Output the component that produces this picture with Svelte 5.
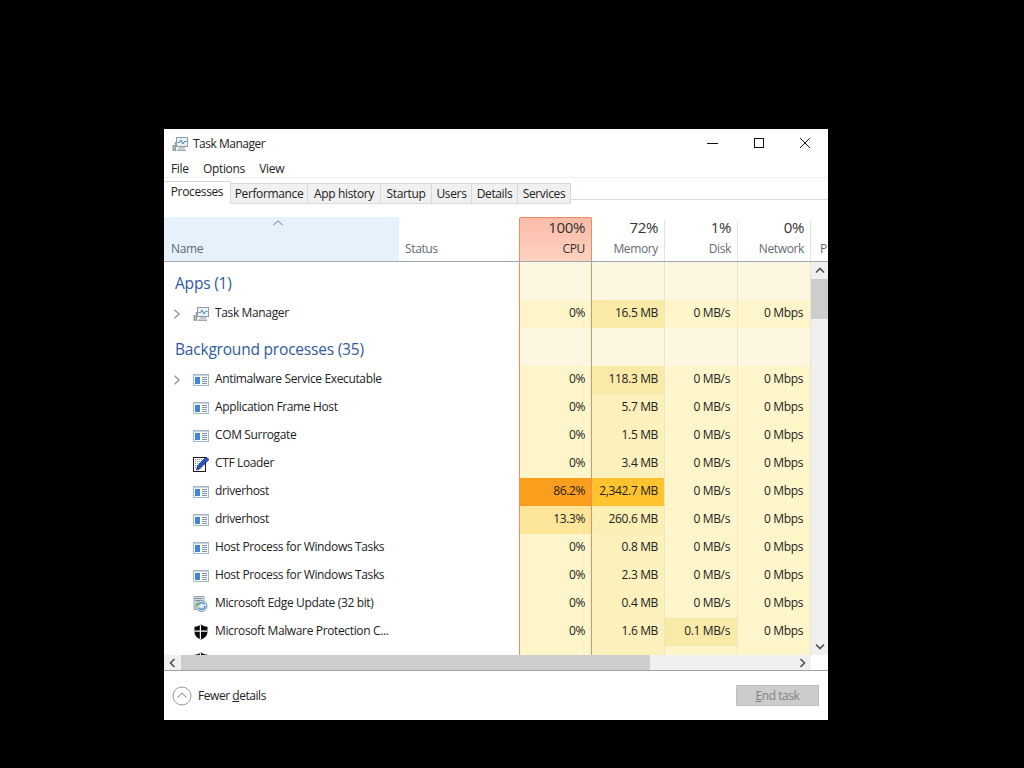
<script>
  const tabs = ['Performance', 'App history', 'Startup', 'Users', 'Details', 'Services'];

  const apps = [{ name: 'Task Manager', icon: 'tm', expand: true, cpu: '0%', mem: '16.5 MB', disk: '0 MB/s', net: '0 Mbps', memHeat: 'h2' }];

  const background = [
    { name: 'Antimalware Service Executable', icon: 'win', expand: true, cpu: '0%', mem: '118.3 MB', disk: '0 MB/s', net: '0 Mbps', memHeat: 'h2' },
    { name: 'Application Frame Host', icon: 'win', cpu: '0%', mem: '5.7 MB', disk: '0 MB/s', net: '0 Mbps' },
    { name: 'COM Surrogate', icon: 'win', cpu: '0%', mem: '1.5 MB', disk: '0 MB/s', net: '0 Mbps' },
    { name: 'CTF Loader', icon: 'pen', cpu: '0%', mem: '3.4 MB', disk: '0 MB/s', net: '0 Mbps' },
    { name: 'driverhost', icon: 'win', cpu: '86.2%', mem: '2,342.7 MB', disk: '0 MB/s', net: '0 Mbps', cpuHeat: 'h5', memHeat: 'h4' },
    { name: 'driverhost', icon: 'win', cpu: '13.3%', mem: '260.6 MB', disk: '0 MB/s', net: '0 Mbps', cpuHeat: 'h3', memHeat: 'm2' },
    { name: 'Host Process for Windows Tasks', icon: 'win', cpu: '0%', mem: '0.8 MB', disk: '0 MB/s', net: '0 Mbps' },
    { name: 'Host Process for Windows Tasks', icon: 'win', cpu: '0%', mem: '2.3 MB', disk: '0 MB/s', net: '0 Mbps' },
    { name: 'Microsoft Edge Update (32 bit)', icon: 'edge', cpu: '0%', mem: '0.4 MB', disk: '0 MB/s', net: '0 Mbps' },
    { name: 'Microsoft Malware Protection C...', icon: 'shield', cpu: '0%', mem: '1.6 MB', disk: '0.1 MB/s', net: '0 Mbps', diskHeat: 'h2' },
    { name: '', icon: 'shield', cpu: '', mem: '', disk: '', net: '' }
  ];
</script>

{#snippet icon(kind)}
  {#if kind === 'tm'}
    <svg class="ico" viewBox="0 0 16 16">
      <rect x="4.500" y="1.500" width="11" height="9" fill="#e6f0f6" stroke="#8f9ca5" />
      <path d="M5.500 6.500h2l1.500-2.500 2 4 1.500-2.500h2" fill="none" stroke="#4b8a9c" />
      <path d="M7 11h6v2H6z" fill="#c2ccd2" />
      <path d="M5 13.500h9v1.500H5z" fill="#9aa6ae" />
      <path d="M0.500 9h2v6h-2zM2.800 6h1.400v9H2.800z" fill="#8f9f98" />
    </svg>
  {:else if kind === 'win'}
    <svg class="ico" viewBox="0 0 16 16">
      <rect x="0.500" y="2.500" width="15" height="11" fill="#f8fafc" stroke="#a5b6c6" />
      <rect x="1" y="3" width="14" height="1" fill="#c3d6ea" />
      <rect x="2" y="5" width="5" height="7" fill="#3f86d2" />
      <path d="M9 5.500h5M9 7.500h5M9 9.500h5M9 11.500h5" stroke="#8294a5" />
    </svg>
  {:else if kind === 'pen'}
    <svg class="ico" viewBox="0 0 16 16">
      <rect x="0.500" y="1.500" width="12" height="14" fill="#fff" stroke="#1a1a1a" />
      <path d="M2 3.500h9M2 5.500h7M2 7.500h6M2 9.500h4M2 11.500h3" stroke="#8795a5" stroke-dasharray="1 1" />
      <path d="M3.500 14l1-4L13 1l3 2.500L6.500 13z" fill="#2c55c4" stroke="#0d1f5c" stroke-width=".7" />
    </svg>
  {:else if kind === 'edge'}
    <svg class="ico" viewBox="0 0 16 16">
      <rect x="1" y="0.500" width="10" height="13" fill="#cfdde8" stroke="#98a8b4" />
      <path d="M2 2.500h7M2 4.500h5" stroke="#7f93a4" />
      <circle cx="8.500" cy="10" r="5.500" fill="#d9e8ee" stroke="#7f8f9b" />
      <path d="M5 10a3.500 3.500 0 0 1 6.500-1.600M12 10a3.500 3.500 0 0 1-6.500 1.600" fill="none" stroke="#3a8cc7" stroke-width="1.300" />
      <path d="M2.800 7h3v3.500h-3z" fill="#7fb574" />
    </svg>
  {:else}
    <svg class="ico" viewBox="0 0 16 16">
      <path d="M8 0.500c1.800 1.300 3.800 2 6.500 2.200v5c0 3.700-2.500 6.300-6.500 7.800-4-1.500-6.500-4.100-6.500-7.800v-5C4.200 2.500 6.200 1.800 8 0.500z" fill="#0b0b0b" />
      <path d="M7.400 1v14M1.500 7.200h13" stroke="#fff" stroke-width="1.200" />
    </svg>
  {/if}
{/snippet}

{#snippet row(r)}
  <div class="row">
    <div class="name">
      <span class="expander">
        {#if r.expand}
          <svg width="8" height="10" viewBox="0 0 8 10"><path d="M1.500 0.800 6 5 1.500 9.200" fill="none" stroke="#9a9a9a" stroke-width="1.500" /></svg>
        {/if}
      </span>
      {@render icon(r.icon)}
      <span class="label">{r.name}</span>
    </div>
    <div class="status"></div>
    <div class="cell cpu {r.cpuHeat ?? 'h1'}">{r.cpu}</div>
    <div class="cell {r.memHeat ?? 'm1'}">{r.mem}</div>
    <div class="cell {r.diskHeat ?? 'h1'}">{r.disk}</div>
    <div class="cell h1">{r.net}</div>
  </div>
{/snippet}

{#snippet group(title)}
  <div class="row group">
    <div class="group-title">{title}</div>
    <div class="status"></div>
    <div class="cell cpu h0"></div>
    <div class="cell h0"></div>
    <div class="cell h0"></div>
    <div class="cell h0"></div>
  </div>
{/snippet}

<div class="window">
  <div class="titlebar">
    <div class="title">
      {@render icon('tm')}
      <span>Task Manager</span>
    </div>
    <div class="controls">
      <svg width="12" height="12" viewBox="0 0 12 12"><path d="M0 6.500h11" stroke="#111" /></svg>
      <svg width="12" height="12" viewBox="0 0 12 12"><rect x="1.500" y="1.500" width="9" height="9" fill="none" stroke="#111" /></svg>
      <svg width="12" height="12" viewBox="0 0 12 12"><path d="M1 1l10 10M11 1 1 11" stroke="#111" /></svg>
    </div>
  </div>

  <div class="menu">
    <span>File</span>
    <span>Options</span>
    <span>View</span>
  </div>

  <div class="tabs">
    <div class="tab active">Processes</div>
    {#each tabs as t}
      <div class="tab">{t}</div>
    {/each}
  </div>

  <div class="table-head">
    <div class="th-name">
      <svg class="sort" width="10" height="6" viewBox="0 0 10 6"><path d="M0.500 5 5 1l4.500 4" fill="none" stroke="#a0a6ab" stroke-width="1.200" /></svg>
      <span>Name</span>
    </div>
    <div class="th-status">Status</div>
    <div class="th-col hot"><b>100%</b><span>CPU</span></div>
    <div class="th-col"><b>72%</b><span>Memory</span></div>
    <div class="th-col"><b>1%</b><span>Disk</span></div>
    <div class="th-col"><b>0%</b><span>Network</span></div>
    <div class="th-more">P</div>
  </div>

  <div class="body">
    <div class="rows">
      {@render group('Apps (1)')}
      {#each apps as r}
        {@render row(r)}
      {/each}
      {@render group('Background processes (35)')}
      {#each background as r}
        {@render row(r)}
      {/each}
    </div>
    <div class="vscroll">
      <svg width="10" height="7" viewBox="0 0 10 7"><path d="M1 5.500 5 1.500l4 4" fill="none" stroke="#505050" stroke-width="1.600" /></svg>
      <div class="vtrack"><div class="vthumb"></div></div>
      <svg width="10" height="7" viewBox="0 0 10 7"><path d="M1 1.500 5 5.500l4-4" fill="none" stroke="#505050" stroke-width="1.600" /></svg>
    </div>
  </div>

  <div class="hscroll">
    <div class="hbar">
      <svg width="7" height="10" viewBox="0 0 7 10"><path d="M5.500 1 1.500 5l4 4" fill="none" stroke="#505050" stroke-width="1.600" /></svg>
      <div class="htrack"><div class="hthumb"></div></div>
      <svg width="7" height="10" viewBox="0 0 7 10"><path d="M1.500 1 5.500 5l-4 4" fill="none" stroke="#505050" stroke-width="1.600" /></svg>
    </div>
    <div class="corner"></div>
  </div>

  <div class="footer">
    <div class="fewer">
      <svg width="20" height="20" viewBox="0 0 20 20">
        <circle cx="10" cy="10" r="9" fill="#fff" stroke="#9a9a9a" />
        <path d="M5.500 11.500 10 7l4.500 4.500" fill="none" stroke="#a8a8a8" stroke-width="1.200" />
      </svg>
      <span>Fewer <u>d</u>etails</span>
    </div>
    <div class="end-task"><u>E</u>nd task</div>
  </div>
</div>

<style>
  :global(body) {
    background: #000;
  }

  .window {
    box-sizing: border-box;
    width: 664px;
    height: 591px;
    margin: 129px 0 0 164px;
    background: #fff;
    display: flex;
    flex-direction: column;
    overflow: hidden;
    font-family: 'Open Sans', sans-serif;
    font-size: 12px;
    letter-spacing: -0.36px;
    color: #222;
  }

  .titlebar {
    height: 27px;
    display: flex;
    align-items: center;
    justify-content: space-between;
    padding: 3px 17px 0 8px;
    box-sizing: border-box;
    flex: none;
  }

  .title {
    display: flex;
    align-items: center;
    gap: 5px;
  }

  .title span {
    margin-bottom: 2px;
    letter-spacing: -0.5px;
  }

  .controls {
    display: flex;
    gap: 34px;
    margin-top: -2px;
  }

  .ico {
    width: 16px;
    height: 16px;
    flex: none;
  }

  .menu {
    height: 22px;
    display: flex;
    align-items: center;
    gap: 14.500px;
    padding: 3px 0 0 7px;
    flex: none;
    border-bottom: 1px solid #f0f0f0;
    box-sizing: border-box;
  }

  .tabs {
    height: 39px;
    flex: none;
    display: grid;
    grid-template-columns: 67px 77px 73px 51px 40px 46px 53px 1fr;
    align-items: start;
    padding-top: 5px;
    box-sizing: border-box;
    background: linear-gradient(#fff 21px, #d9d9d9 21px, #d9d9d9 22px, #fff 22px);
  }

  .tab {
    height: 21px;
    line-height: 20px;
    text-align: center;
    box-sizing: border-box;
    background: #f0f0f0;
    border: 1px solid #d9d9d9;
    border-left: 0;
    white-space: nowrap;
  }

  .tab.active {
    height: 23px;
    margin-top: -2px;
    background: #fff;
    border-bottom: 0;
    position: relative;
  }

  .table-head {
    height: 45px;
    flex: none;
    display: grid;
    grid-template-columns: 235px 120px 73px 73px 73px 73px 17px;
    grid-template-rows: 44px;
    border-bottom: 1px solid #a0a8ac;
    box-sizing: border-box;
    color: #4c607a;
    line-height: 16px;
    overflow: hidden;
  }

  .th-name {
    background: #e6f2fb;
    position: relative;
    display: flex;
    align-items: flex-end;
    padding: 0 0 4px 7px;
    color: #5a6a75;
  }

  .sort {
    position: absolute;
    left: 109px;
    top: 3px;
  }

  .th-status {
    align-self: end;
    padding: 0 0 4px 6px;
    color: #5f6b75;
  }

  .th-col {
    display: flex;
    flex-direction: column;
    align-items: flex-end;
    justify-content: flex-end;
    padding: 0 6px 4px 0;
    border-right: 1px solid #dfe3e6;
    margin-top: 3px;
    color: #5f6b75;
  }

  .th-col b {
    font-weight: 400;
    font-size: 15px;
    line-height: 20px;
    margin-bottom: 4px;
    color: #333;
  }

  .th-col.hot {
    background: linear-gradient(#fbbba8, #fcd2c0);
    border: 1px solid #f58a5e;
    border-bottom: 0;
    margin-top: 0;
    border-radius: 2px 2px 0 0;
    color: #333;
  }

  .th-more {
    align-self: end;
    padding: 0 0 4px 9px;
    white-space: nowrap;
    color: #5f6b75;
  }

  .body {
    height: 393px;
    flex: none;
    display: flex;
    overflow: hidden;
  }

  .rows {
    width: 647px;
    flex: none;
    overflow: hidden;
  }

  .row {
    display: grid;
    grid-template-columns: 235px 120px 73px 73px 73px 73px;
    height: 28px;
  }

  .row.group {
    height: 38px;
  }

  .group-title {
    font-size: 15.500px;
    letter-spacing: -0.2px;
    color: #2f5a9e;
    padding: 10px 0 0 11px;
    line-height: 22px;
    white-space: nowrap;
  }

  .name {
    display: flex;
    align-items: center;
  }

  .expander {
    width: 29px;
    padding-left: 9px;
    box-sizing: border-box;
    display: flex;
    flex: none;
  }

  .label {
    margin: 0 0 3px 6px;
    white-space: nowrap;
  }

  .cell {
    text-align: right;
    padding-right: 6px;
    line-height: 26px;
    border-right: 1px solid #ece6c8;
    white-space: nowrap;
  }

  .cell:nth-child(n + 5) {
    padding-right: 7px;
  }

  .row.group .cell {
    height: 38px;
  }

  .cell.cpu {
    border-left: 1px solid #f58a5e;
    border-right: 1px solid #f58a5e;
  }

  .h0 { background: #fdf7e2; }
  .h1 { background: #fef5ca; }
  .m1 { background: #fcf0bd; }
  .m2 { background: #fcefb6; }
  .h2 { background: #f9eaa8; }
  .h3 { background: #fde59a; }
  .h4 { background: #ffc32f; }
  .h5 { background: #fb9d1d; }

  .vscroll {
    width: 17px;
    flex: none;
    background: #f0f0f0;
    display: flex;
    flex-direction: column;
    align-items: center;
    padding: 5px 0;
    box-sizing: border-box;
    gap: 4px;
  }

  .vtrack {
    flex: 1;
    width: 100%;
  }

  .vthumb {
    height: 40px;
    margin-top: 1px;
    background: #cdcdcd;
  }

  .hscroll {
    height: 16px;
    flex: none;
    display: flex;
    border-bottom: 1px solid #a0a0a0;
    box-sizing: border-box;
  }

  .hbar {
    width: 647px;
    flex: none;
    display: flex;
    align-items: center;
    gap: 5px;
    padding: 0 5px;
    box-sizing: border-box;
    background: #f0f0f0;
  }

  .htrack {
    flex: 1;
    height: 100%;
  }

  .hthumb {
    width: 469px;
    height: 100%;
    background: #cdcdcd;
  }

  .corner {
    flex: 1;
    background: #fff;
  }

  .footer {
    flex: 1;
    display: flex;
    align-items: center;
    justify-content: space-between;
    padding: 0 9px 0 8px;
    letter-spacing: -0.45px;
  }

  .fewer {
    display: flex;
    align-items: center;
    gap: 6px;
  }

  .end-task {
    width: 83px;
    height: 21px;
    line-height: 20px;
    text-align: center;
    box-sizing: border-box;
    background: #ccc;
    border: 1px solid #bfbfbf;
    color: #838383;
  }
</style>
